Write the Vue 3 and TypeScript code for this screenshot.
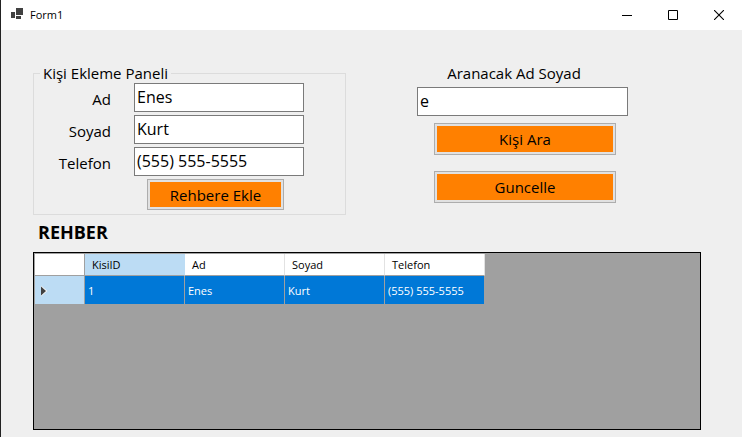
<script setup lang="ts">
import { reactive, ref } from 'vue'

interface Person {
  id: number
  name: string
  surname: string
  phone: string
}

const form = reactive({ name: 'Enes', surname: 'Kurt', phone: '(555) 555-5555' })
const query = ref('e')
const columns: string[] = ['KisiID', 'Ad', 'Soyad', 'Telefon']
const people = ref<Person[]>([{ id: 1, name: 'Enes', surname: 'Kurt', phone: '(555) 555-5555' }])
const selected = ref(1)

function addPerson(): void {
  people.value.push({ id: people.value.length + 1, ...form })
}
</script>

<template>
  <div class="window">
    <header class="titlebar">
      <svg class="app-icon" width="13" height="12" viewBox="0 0 13 12" shape-rendering="crispEdges">
        <path fill="#414141" d="M5 0h7v7H5zM0 4h4v6H0zM5 8h5v3H5z" />
      </svg>
      <span class="title">Form1</span>
      <button class="caption" aria-label="Minimize">
        <svg width="10" height="10" viewBox="0 0 10 10"><path d="M0 5.5h10" stroke="#000" /></svg>
      </button>
      <button class="caption" aria-label="Maximize">
        <svg width="10" height="10" viewBox="0 0 10 10"><path d="M.5 .5h9v9h-9z" fill="none" stroke="#000" /></svg>
      </button>
      <button class="caption" aria-label="Close">
        <svg width="10" height="10" viewBox="0 0 10 10"><path d="M0 0l10 10M10 0L0 10" stroke="#000" stroke-width="1.1" /></svg>
      </button>
    </header>

    <main class="content">
      <div class="panels">
        <fieldset class="group">
          <legend>Kişi Ekleme Paneli</legend>
          <div class="fields">
            <label for="name">Ad</label>
            <input id="name" v-model="form.name" type="text" />
            <label for="surname">Soyad</label>
            <input id="surname" v-model="form.surname" type="text" />
            <label for="phone">Telefon</label>
            <input id="phone" v-model="form.phone" type="text" />
          </div>
          <button class="action add" type="button" @click="addPerson">Rehbere Ekle</button>
        </fieldset>

        <section class="search">
          <label for="query">Aranacak Ad Soyad</label>
          <input id="query" v-model="query" type="text" />
          <div class="search-actions">
            <button class="action" type="button">Kişi Ara</button>
            <button class="action" type="button">Guncelle</button>
          </div>
        </section>
      </div>

      <h1>REHBER</h1>
      <div class="grid">
        <table>
          <thead>
            <tr>
              <th class="corner"></th>
              <th v-for="(column, i) in columns" :key="column" :class="{ current: i === 0 }">{{ column }}</th>
            </tr>
          </thead>
          <tbody>
            <tr v-for="p in people" :key="p.id" :class="{ selected: p.id === selected }" @click="selected = p.id">
              <th class="row-head">
                <svg v-if="p.id === selected" width="8" height="12" viewBox="0 0 8 12">
                  <path d="M1 0.500v11l6.500-5.500z" fill="#f4f4f4" />
                  <path d="M1 1.500v9l5-4.500z" fill="#414141" />
                </svg>
              </th>
              <td>{{ p.id }}</td>
              <td>{{ p.name }}</td>
              <td>{{ p.surname }}</td>
              <td>{{ p.phone }}</td>
            </tr>
          </tbody>
        </table>
      </div>
    </main>
  </div>
</template>

<style>
body {
  background: #efefef;
}
</style>

<style scoped>
* {
  box-sizing: border-box;
}
.window {
  display: flex;
  flex-direction: column;
  min-height: 100vh;
  border-left: 1px solid #222;
  background: #efefef;
  color: #000;
  font: 15px/20px 'Open Sans', 'Noto Sans', sans-serif;
}
.titlebar {
  display: flex;
  align-items: center;
  height: 30px;
  padding-left: 10px;
  background: #fff;
}
.app-icon {
  margin-bottom: 2px;
}
.title {
  flex: 1;
  padding-left: 6px;
  font-size: 11px;
}
.caption {
  display: flex;
  align-items: center;
  justify-content: center;
  width: 46px;
  height: 28px;
  padding: 0;
  border: 0;
  background: none;
}
.content {
  flex: 1;
  display: flex;
  flex-direction: column;
  padding: 33px 41px 7px 32px;
}
.panels {
  display: flex;
  align-items: flex-start;
  justify-content: space-between;
  padding-right: 73px;
}
.group {
  width: 313px;
  margin: 0;
  padding: 0 41px 4px 7px;
  border: 1px solid #dcdcdc;
}
legend {
  margin-left: -1px;
  padding: 0 3px;
  height: 20px;
}
.fields {
  display: grid;
  grid-template-columns: 1fr 170px;
  column-gap: 23px;
  row-gap: 3px;
  align-items: center;
  text-align: right;
}
.fields label {
  padding-top: 3px;
}
input {
  width: 100%;
  height: 29px;
  padding: 0 2px 2px;
  border: 1px solid #7a7a7a;
  border-radius: 0;
  outline: 0;
  background: #fff;
  color: #000;
  font: inherit;
  font-size: 16px;
}
.action {
  height: 32px;
  padding: 0;
  border: 1px solid #adadad;
  background: #ff8000;
  box-shadow: inset 0 0 0 2px #e1e1e1;
  color: #000;
  font: inherit;
}
.add {
  display: block;
  width: 137px;
  height: 31px;
  margin: 3px 20px 0 auto;
}
.search {
  display: flex;
  flex-direction: column;
  width: 211px;
}
.search label {
  margin-bottom: 4px;
  padding-right: 17px;
  text-align: center;
}
.search-actions {
  display: grid;
  gap: 16px;
  padding: 7px 12px 0 17px;
}
h1 {
  margin: 5px 0 8px 5px;
  font-size: 18px;
  line-height: 24px;
}
.grid {
  flex: 1;
  min-height: 178px;
  padding: 1px;
  border: 1px solid #000;
  background: #a0a0a0;
}
table {
  width: 450px;
  table-layout: fixed;
  border-collapse: separate;
  border-spacing: 0;
  font-size: 11px;
}
th,
td {
  height: 29px;
  padding: 1px 3px 0;
  border: solid #a0a0a0;
  border-width: 0 1px 1px 0;
  text-align: left;
  font-weight: 400;
}
thead th {
  height: 22px;
  padding: 0 7px;
  border-right-color: #e2e2e2;
  background: #fff;
}
thead .corner {
  width: 50px;
  border-right-color: #a0a0a0;
}
thead .current {
  border-right-color: #bcdcf4;
  background: #bcdcf4;
}
.row-head {
  padding-left: 5px;
  background: #fff;
}
.row-head svg {
  display: block;
}
td {
  background: #fff;
}
.selected .row-head {
  background: #bcdcf4;
}
.selected td {
  background: #0078d7;
  color: #fff;
}
</style>
